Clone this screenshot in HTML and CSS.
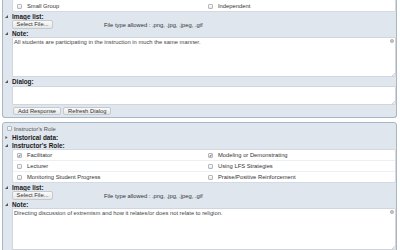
FILE: index.html
```html
<!DOCTYPE html>
<html lang="en">

<head>
  <meta charset="UTF-8" />
  <title>Observation form</title>
  <link rel="stylesheet" href="styles.css">
</head>

<body>
  <div class="panel cut">
    <div class="opts">
      <div class="opt"><span class="cb"></span>Small Group</div>
      <div class="opt"><span class="cb"></span>Independent</div>
    </div>

    <div class="lbl"><svg class="arr" viewBox="0 0 4 4"><polygon points="4,0 4,4 0,4" /></svg>Image list:</div>
    <div class="filerow">
      <button class="btn">Select File...</button>
      <span class="types">File type allowed : .png, .jpg, .jpeg, .gif</span>
    </div>

    <div class="lbl"><svg class="arr" viewBox="0 0 4 4"><polygon points="4,0 4,4 0,4" /></svg>Note:</div>
    <div class="ta-wrap">
      <textarea class="note">All students are participating in the instruction in much the same manner.</textarea>
      <svg class="ta-icon" viewBox="0 0 6 6"><circle cx="3" cy="3" r="2.4" /><path d="M3 1.6v2.8M1.6 3h2.8" /></svg>
      <svg class="grip" viewBox="0 0 4 4"><path d="M4 0L0 4M4 2L2 4" /></svg>
    </div>

    <div class="lbl"><svg class="arr" viewBox="0 0 4 4"><polygon points="4,0 4,4 0,4" /></svg>Dialog:</div>
    <div class="ta-wrap">
      <textarea class="dialog"></textarea>
      <svg class="grip" viewBox="0 0 4 4"><path d="M4 0L0 4M4 2L2 4" /></svg>
    </div>
    <div class="btnrow">
      <button class="btn">Add Response</button>
      <button class="btn">Refresh Dialog</button>
    </div>
  </div>

  <div class="panel">
    <div class="head"><span class="cb"></span>Instructor's Role</div>

    <div class="lbl"><svg class="arr" viewBox="0 0 4 4"><polygon points="0.5,0 3.5,2 0.5,4" /></svg>Historical data:</div>
    <div class="lbl"><svg class="arr" viewBox="0 0 4 4"><polygon points="4,0 4,4 0,4" /></svg>Instructor's Role:</div>
    <div class="opts">
      <div class="opt"><span class="cb on">&#10003;</span>Facilitator</div>
      <div class="opt"><span class="cb on">&#10003;</span>Modeling or Demonstrating</div>
      <div class="opt"><span class="cb"></span>Lecturer</div>
      <div class="opt"><span class="cb"></span>Using LFS Strategies</div>
      <div class="opt"><span class="cb"></span>Monitoring Student Progress</div>
      <div class="opt"><span class="cb"></span>Praise/Positive Reinforcement</div>
    </div>

    <div class="lbl"><svg class="arr" viewBox="0 0 4 4"><polygon points="4,0 4,4 0,4" /></svg>Image list:</div>
    <div class="filerow">
      <button class="btn">Select File...</button>
      <span class="types">File type allowed : .png, .jpg, .jpeg, .gif</span>
    </div>

    <div class="lbl"><svg class="arr" viewBox="0 0 4 4"><polygon points="4,0 4,4 0,4" /></svg>Note:</div>
    <div class="ta-wrap">
      <textarea class="note tall">Directing discussion of extremism and how it relates/or does not relate to religion.</textarea>
      <svg class="ta-icon" viewBox="0 0 6 6"><circle cx="3" cy="3" r="2.4" /><path d="M3 1.6v2.8M1.6 3h2.8" /></svg>
      <svg class="grip" viewBox="0 0 4 4"><path d="M4 0L0 4M4 2L2 4" /></svg>
    </div>
  </div>
</body>

</html>
```

FILE: styles.css
```css
body,
div,
p {
  margin: 0;
  padding: 0;
}

body {
  background: #fff;
  font-family: "Liberation Sans", Arial, sans-serif;
  font-size: 5.8px;
  color: #333;
  overflow: hidden;
}

.panel {
  margin: 0 3px 4px 2px;
  border: 1px solid #a9b6c4;
  border-radius: 3px;
  background: #dfe6ee;
  padding: 0 0 2px 9px;
}

.panel.cut {
  border-top: 0;
  border-radius: 0 0 3px 3px;
}

.opts {
  display: grid;
  grid-template-columns: 1fr 1fr;
  background: #fff;
  border: 1px solid #d3dae2;
  border-radius: 2px;
}

.cut .opts {
  border-top: 0;
  padding-top: 1px;
}

.opt {
  display: flex;
  align-items: center;
  height: 10px;
  padding-left: 4px;
  border-bottom: 1px solid #edf0f3;
}

.opt:nth-last-child(-n+2) {
  border-bottom: 0;
}

.cb {
  display: inline-block;
  width: 3px;
  height: 3px;
  margin-right: 5px;
  border: 1px solid #b4b8bd;
  border-radius: 1px;
  background: linear-gradient(#fff, #e4e6e8);
  font-size: 4px;
  line-height: 3px;
  text-align: center;
  color: #333;
  font-weight: bold;
}

.head {
  display: flex;
  align-items: center;
  height: 11px;
  margin-left: -5px;
  color: #555;
}

.head .cb {
  margin-right: 2px;
}

.lbl {
  display: flex;
  align-items: center;
  height: 8px;
  margin-left: -7px;
  font-size: 6.4px;
  font-weight: bold;
  color: #1a1a1a;
}

.head + .lbl {
  height: 7px;
}

.arr {
  width: 3px;
  height: 3px;
  margin-right: 4px;
  fill: #555;
}

.filerow {
  display: flex;
  align-items: center;
  height: 9px;
}

.btn {
  height: 9px;
  padding: 0 5px;
  margin: 0;
  border: 1px solid #c6c9cc;
  border-radius: 2px;
  background: linear-gradient(#fafafa, #e6e7e8);
  font-family: inherit;
  font-size: 5.8px;
  color: #333;
  line-height: 7px;
  white-space: nowrap;
}

.filerow .btn {
  width: 41px;
  padding: 0;
  text-align: center;
}

.types {
  margin-left: 51px;
  color: #333;
  white-space: nowrap;
}

.ta-wrap {
  position: relative;
  display: flex;
}

textarea {
  flex: 1;
  display: block;
  margin: 0;
  padding: 1px 1px;
  border: 1px solid #cfd6de;
  border-radius: 1px;
  background: #fff;
  font-family: inherit;
  font-size: 5.8px;
  line-height: 6px;
  color: #444;
  resize: none;
  outline: none;
}

.note {
  height: 40px;
  box-sizing: border-box;
}

.note.tall {
  height: 42px;
}

.dialog {
  height: 19px;
  box-sizing: border-box;
  margin-top: 1px;
}

.ta-icon {
  position: absolute;
  top: 2px;
  right: 2px;
  width: 4px;
  height: 4px;
  fill: none;
  stroke: #8a8a8a;
  stroke-width: 0.9;
}

.grip {
  position: absolute;
  right: 1px;
  bottom: 1px;
  width: 3px;
  height: 3px;
  stroke: #aaa;
  stroke-width: 0.7;
}

.btnrow {
  display: flex;
  gap: 2px;
  margin-top: 2px;
  padding-left: 1px;
}

.btnrow .btn {
  height: 8px;
  padding: 0 4px;
}
```
